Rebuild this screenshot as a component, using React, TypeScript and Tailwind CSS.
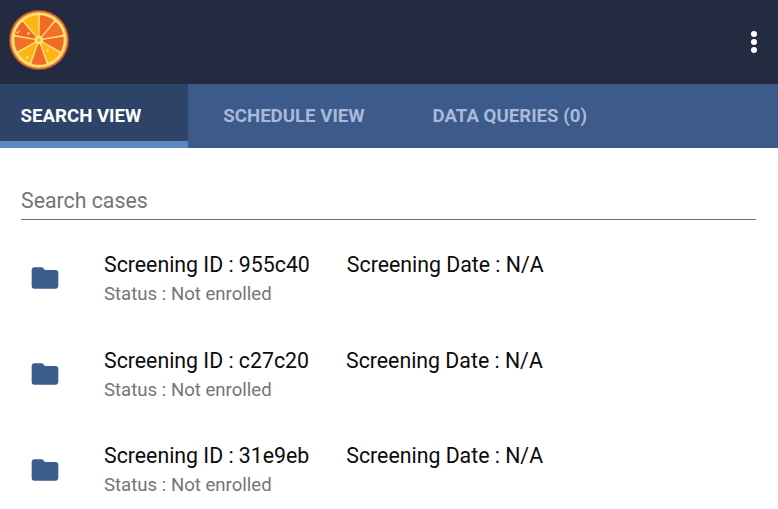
import React from "react";

const SLICE_COLORS = [
  "#f26a28",
  "#f2702a",
  "#f06b27",
  "#fdb515",
  "#f06b27",
  "#fdb515",
  "#f2702a",
  "#f06428",
  "#fdb515",
];

function point(radius: number, degrees: number) {
  const a = (degrees * Math.PI) / 180;
  return `${(radius * Math.cos(a)).toFixed(2)} ${(radius * Math.sin(a)).toFixed(2)}`;
}

function OrangeLogo() {
  return (
    <svg viewBox="-30 -30 60 60" className="h-[60px] w-[60px]">
      <circle r="30" fill="#a6502f" />
      <circle r="29" fill="#ec7b3c" />
      <circle r="27.6" fill="#ffe071" />
      {SLICE_COLORS.map((color, i) => {
        const start = -90 + i * 40;
        return (
          <path
            key={i}
            d={`M${point(5.4, start + 20)} L${point(23.6, start + 5)} A23.8 23.8 0 0 1 ${point(23.6, start + 35)} Z`}
            fill={color}
            stroke={color}
            strokeWidth="2.4"
            strokeLinejoin="round"
          />
        );
      })}
      <circle r="2.2" fill="#f9a52b" stroke="#ffe071" strokeWidth="1.4" />
      <g fill="#ffe3a0">
        <circle cx="-21.5" cy="-7.5" r="1.1" />
        <circle cx="-10.5" cy="-6.5" r="1.2" />
        <circle cx="-19.5" cy="-9" r="0.7" />
        <circle cx="8.5" cy="10.5" r="1.1" />
        <ellipse cx="-12" cy="17.5" rx="0.9" ry="1.6" transform="rotate(25 -12 17.5)" />
      </g>
    </svg>
  );
}

function FolderIcon() {
  return (
    <svg viewBox="0 0 24 24" className="size-8" fill="#3b5c8d">
      <path d="M10 4H4c-1.1 0-1.99.9-1.99 2L2 18c0 1.1.9 2 2 2h16c1.1 0 2-.9 2-2V8c0-1.1-.9-2-2-2h-8l-2-2z" />
    </svg>
  );
}

const CASES = [
  { id: "955c40", height: "h-24", iconTop: "pt-8" },
  { id: "c27c20", height: "h-[95px]", iconTop: "pt-8" },
  { id: "31e9eb", height: "h-24", iconTop: "pt-[33px]" },
];

export default function App() {
  return (
    <div className="flex h-[509px] w-[778px] flex-col overflow-hidden bg-white font-['Roboto',sans-serif]">
      <header className="flex h-[84px] shrink-0 items-start justify-between bg-[#222b3f] pt-[10px] pl-[9px]">
        <OrangeLogo />
        <button aria-label="More options" className="mt-[21px] mr-[21px] flex flex-col gap-[2px]">
          <span className="size-[6px] rounded-full bg-white" />
          <span className="size-[6px] rounded-full bg-white" />
          <span className="size-[6px] rounded-full bg-white" />
        </button>
      </header>

      <nav className="flex h-16 shrink-0 bg-[#3c5b8b] text-[18.65px] leading-[64px] font-bold whitespace-nowrap text-[#a9b9d9]">
        <div className="w-[188px] border-b-[7px] border-[#5b87c2] bg-[#2d4468] pl-[20.5px] text-white">
          SEARCH VIEW
        </div>
        <div className="w-[210px] pl-[35.3px]">SCHEDULE VIEW</div>
        <div className="pl-[34.5px]">DATA QUERIES (0)</div>
      </nav>

      <main className="flex flex-col">
        <div className="mr-[22px] ml-[21px] flex h-[72px] items-end border-b border-[#6e6e6e] pb-1 text-[21.3px] leading-7 text-[#757575]">
          <span>Search cases</span>
        </div>
        <ul className="mt-[10px]">
          {CASES.map((item) => (
            <li key={item.id} className={`flex ${item.height}`}>
              <div className={`w-[104px] shrink-0 pl-[29px] ${item.iconTop}`}>
                <FolderIcon />
              </div>
              <div className="pt-5">
                <div className="flex text-[21.3px] leading-[30px] whitespace-nowrap text-[#0b0b0b]">
                  <span>Screening ID : {item.id}</span>
                  <span className="ml-[37px]">Screening Date : N/A</span>
                </div>
                <div className="text-[18.6px] leading-7 text-[#757575]">Status : Not enrolled</div>
              </div>
            </li>
          ))}
        </ul>
      </main>
    </div>
  );
}
